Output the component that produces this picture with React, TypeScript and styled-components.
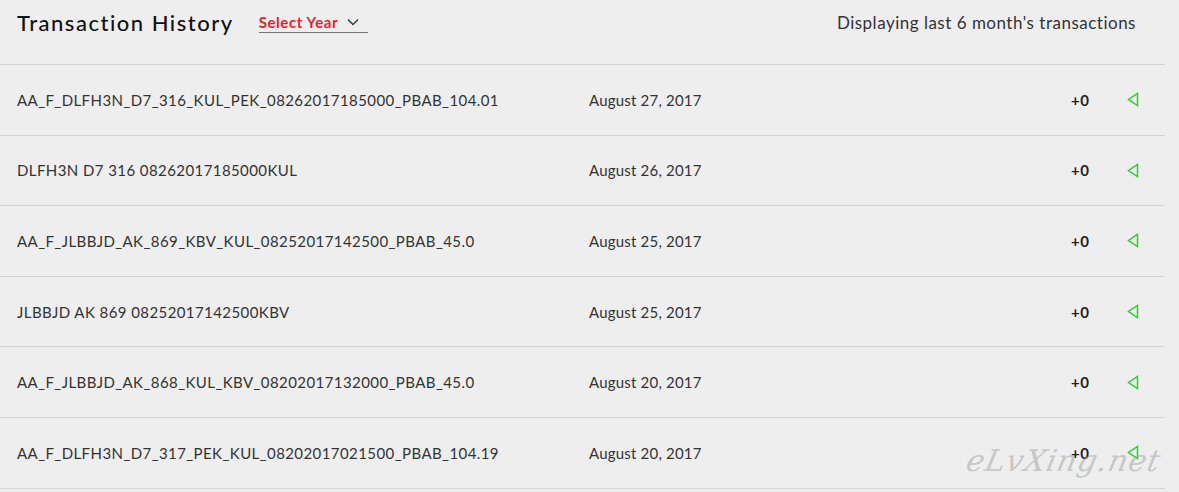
import styled, { createGlobalStyle } from 'styled-components';

const Global = createGlobalStyle`
  html, body {
    margin: 0;
    background: #eeeeee;
    font-family: Lato, "Noto Sans", "Liberation Sans", sans-serif;
    color: #333333;
  }
`;

const Page = styled.div`
  position: relative;
  width: 1165px;
  height: 492px;
  overflow: hidden;
`;

const Header = styled.div`
  display: flex;
  align-items: center;
  height: 65px;
  border-bottom: 1px solid #d3d3d3;
  padding: 0 29px 20px 17px;
  box-sizing: border-box;
`;

const Title = styled.h1`
  margin: 0 25px 0 0;
  font-size: 22px;
  font-weight: 500;
  color: #111111;
  letter-spacing: 1.5px;
`;

const YearSelect = styled.div`
  display: flex;
  align-items: center;
  justify-content: space-between;
  width: 109px;
  box-sizing: border-box;
  padding: 2px 9px 1px 0;
  border-bottom: 1px solid #777777;
  color: #e8202e;
  font-size: 15px;
  font-weight: 700;
  letter-spacing: 0.6px;
`;

const Note = styled.div`
  margin-left: auto;
  font-size: 17px;
  color: #333333;
  letter-spacing: 0.5px;
`;

const Row = styled.div`
  display: flex;
  align-items: center;
  height: 70.6px;
  box-sizing: border-box;
  border-bottom: 1px solid #d3d3d3;
  padding-left: 17px;
  font-size: 15px;
  color: #333333;
`;

const Ref = styled.div`
  width: 572px;
  letter-spacing: 0.42px;
`;

const When = styled.div`
  flex: 1;
  letter-spacing: 0.2px;
`;

const Points = styled.div`
  font-weight: 700;
  width: 56px;
  color: #222222;
  letter-spacing: 0.5px;
`;

const Toggle = styled.div`
  width: 38px;
  display: flex;
  align-items: center;
`;

const Watermark = styled.div`
  position: absolute;
  right: 4px;
  bottom: 14px;
  font-family: "DejaVu Serif", serif;
  font-style: italic;
  font-size: 30px;
  letter-spacing: 1px;
  color: rgba(160, 160, 160, 0.5);
  transform: skewX(-12deg);
  pointer-events: none;
`;

const rows = [
  ['AA_F_DLFH3N_D7_316_KUL_PEK_08262017185000_PBAB_104.01', 'August 27, 2017'],
  ['DLFH3N D7 316 08262017185000KUL', 'August 26, 2017'],
  ['AA_F_JLBBJD_AK_869_KBV_KUL_08252017142500_PBAB_45.0', 'August 25, 2017'],
  ['JLBBJD AK 869 08252017142500KBV', 'August 25, 2017'],
  ['AA_F_JLBBJD_AK_868_KUL_KBV_08202017132000_PBAB_45.0', 'August 20, 2017'],
  ['AA_F_DLFH3N_D7_317_PEK_KUL_08202017021500_PBAB_104.19', 'August 20, 2017'],
];

const App = () => {
  return (
    <Page>
      <Global />
      <Header>
        <Title>Transaction History</Title>
        <YearSelect>
          Select Year
          <svg width="12" height="8" viewBox="0 0 12 8" fill="none">
            <path d="M1 1.5l5 5 5-5" stroke="#333" strokeWidth="1.3" />
          </svg>
        </YearSelect>
        <Note>Displaying last 6 month's transactions</Note>
      </Header>
      {rows.map(([ref, date], i) => (
        <Row key={i}>
          <Ref>{ref}</Ref>
          <When>{date}</When>
          <Points>+0</Points>
          <Toggle>
            <svg width="12" height="15" viewBox="0 0 12 15" fill="none">
              <path d="M10.5 1.5v12L1.5 7.5z" stroke="#33cc33" strokeWidth="1.5" />
            </svg>
          </Toggle>
        </Row>
      ))}
      <Watermark>eLvXing.net</Watermark>
    </Page>
  );
};

export default App;
